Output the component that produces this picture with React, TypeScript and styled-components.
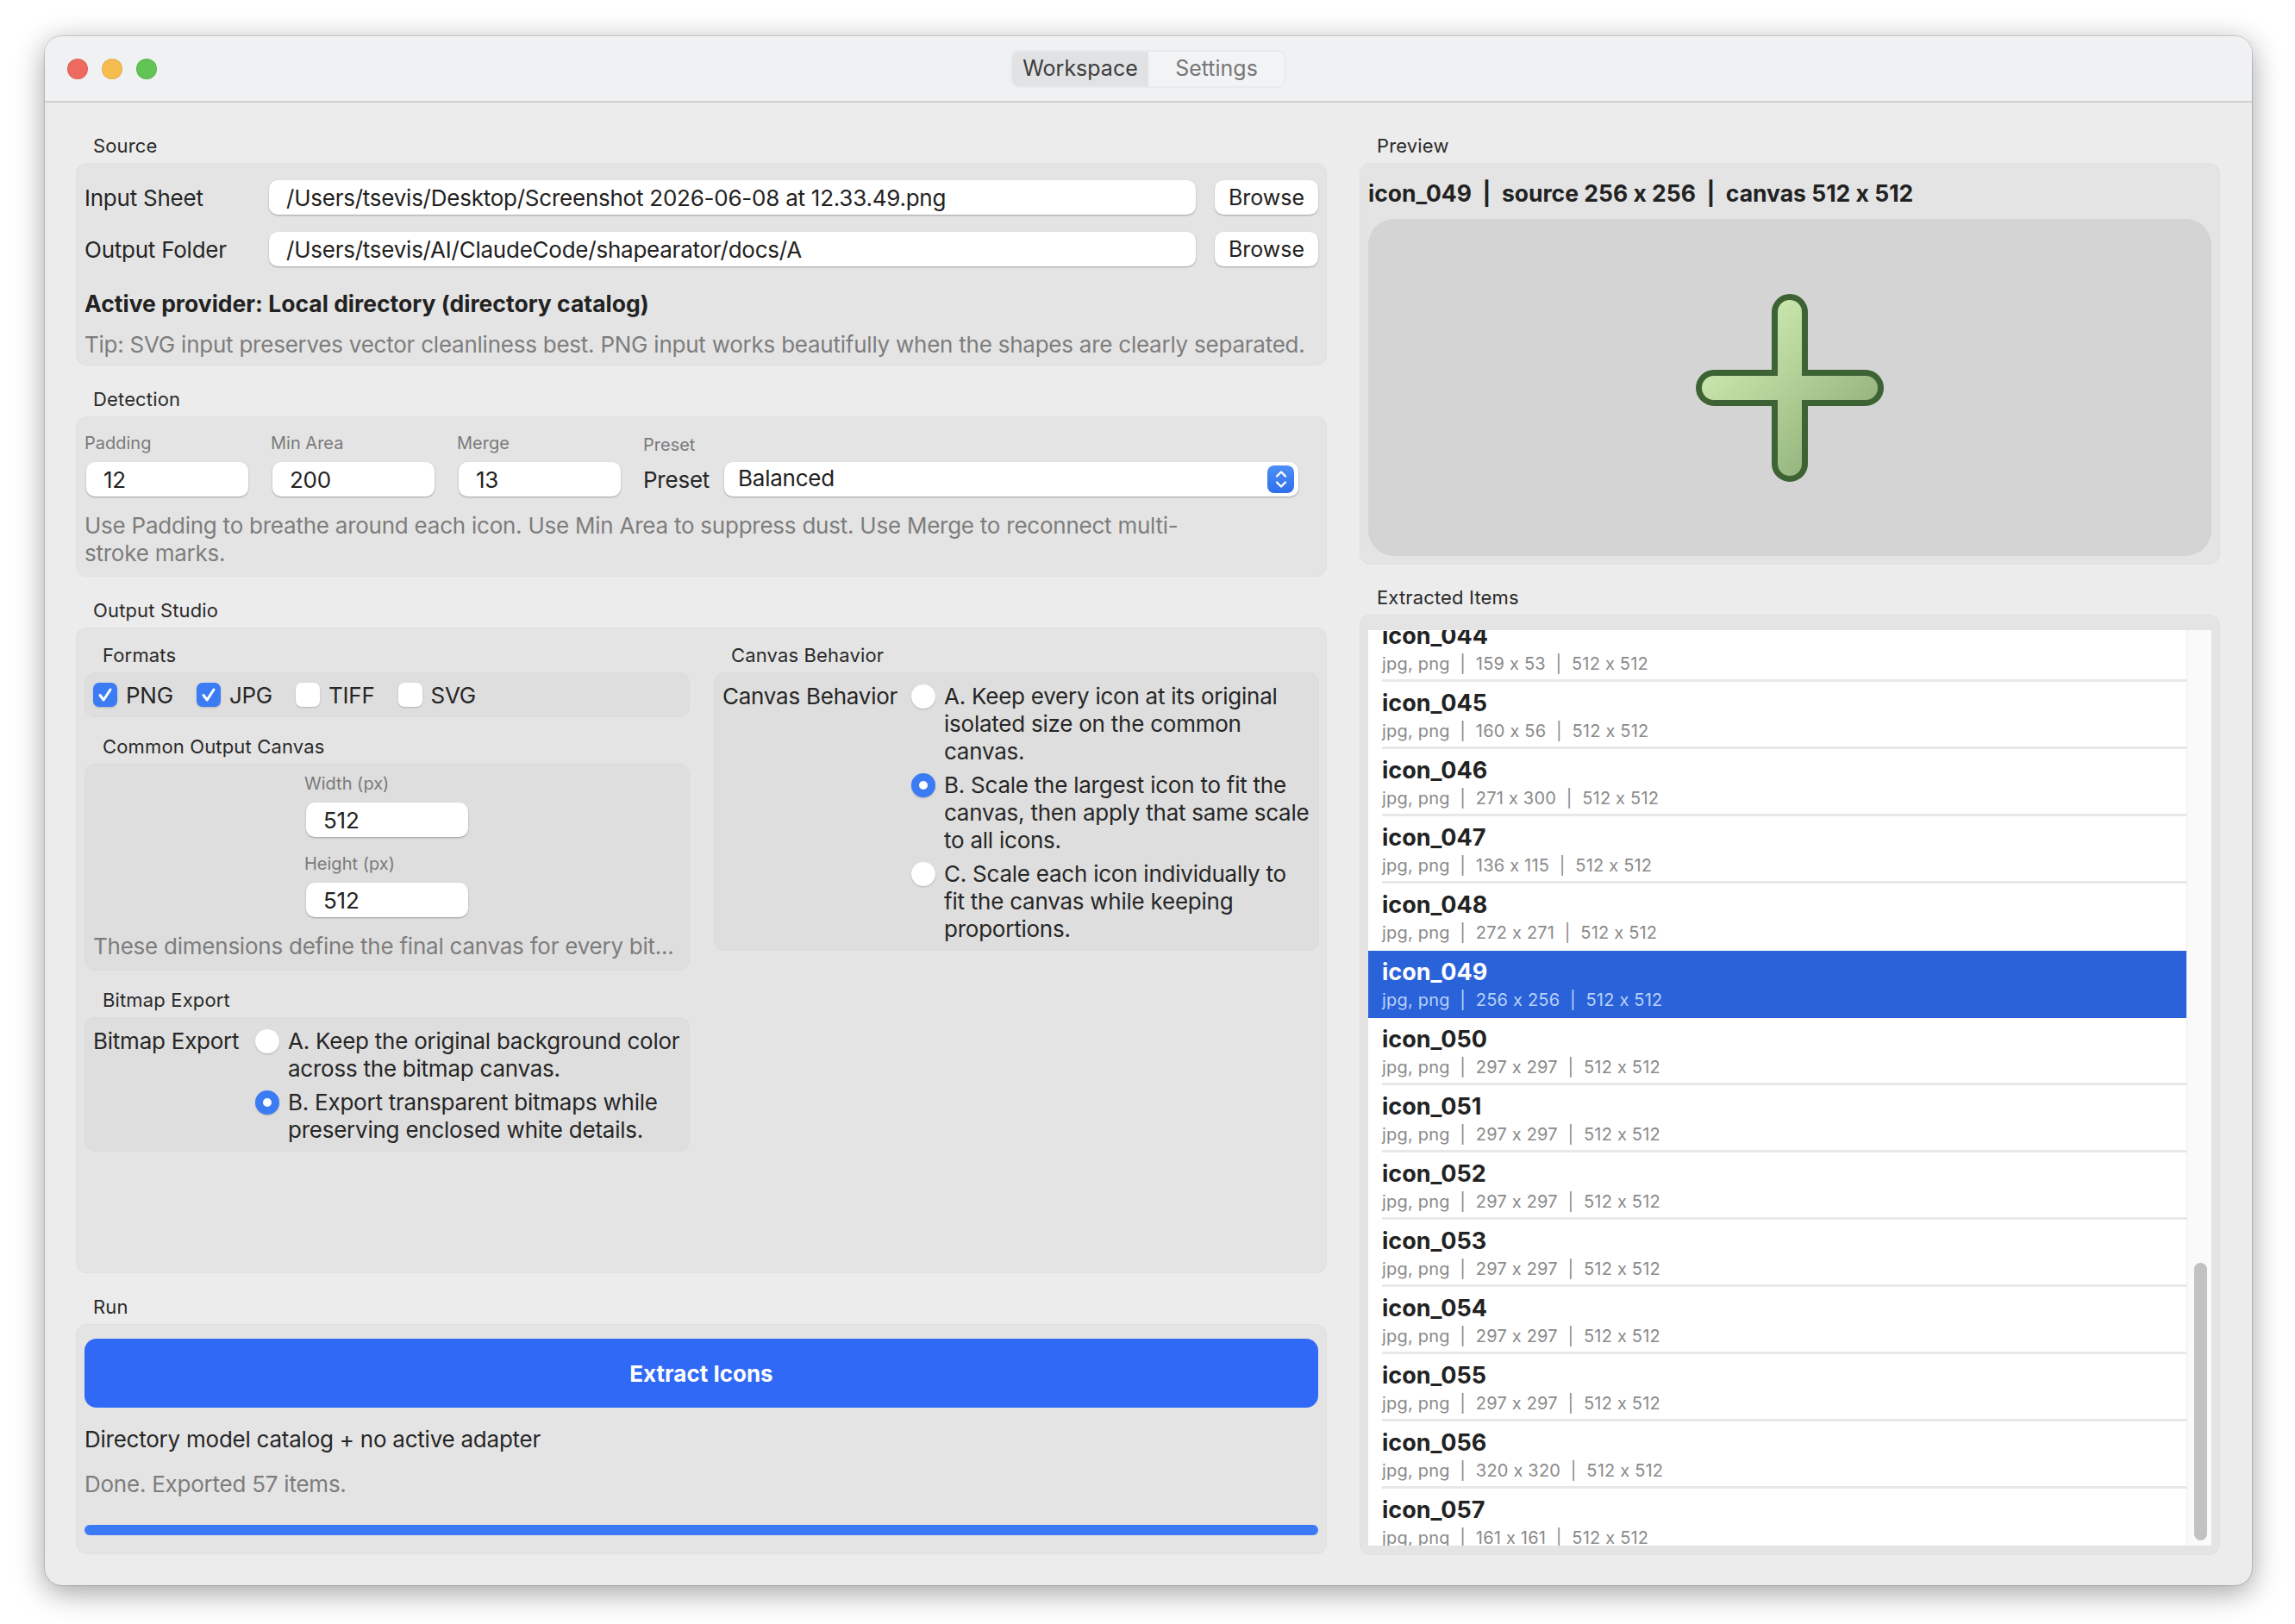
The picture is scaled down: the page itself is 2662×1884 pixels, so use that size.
import React from "react";
import styled, { createGlobalStyle } from "styled-components";

const rows = [
  ["icon_044", "159 x 53"],
  ["icon_045", "160 x 56"],
  ["icon_046", "271 x 300"],
  ["icon_047", "136 x 115"],
  ["icon_048", "272 x 271"],
  ["icon_049", "256 x 256"],
  ["icon_050", "297 x 297"],
  ["icon_051", "297 x 297"],
  ["icon_052", "297 x 297"],
  ["icon_053", "297 x 297"],
  ["icon_054", "297 x 297"],
  ["icon_055", "297 x 297"],
  ["icon_056", "320 x 320"],
  ["icon_057", "161 x 161"],
];

const SELECTED = "icon_049";

function CheckBox({ label, checked }: { label: string; checked?: boolean }) {
  return (
    <CheckItem>
      <CheckSquare $checked={checked}>
        {checked && (
          <svg width="20" height="20" viewBox="0 0 20 20" fill="none">
            <path d="M4 10.5 8.2 16 16 4" stroke="#fff" strokeWidth="3" strokeLinecap="round" strokeLinejoin="round" />
          </svg>
        )}
      </CheckSquare>
      {label}
    </CheckItem>
  );
}

function RadioOption({ text, on }: { text: string; on?: boolean }) {
  return (
    <OptionRow>
      <RadioDot $on={on} />
      <OptionText>{text}</OptionText>
    </OptionRow>
  );
}

export default function App() {
  return (
    <Page>
      <GlobalStyle />
      <Window>
        <TitleBar>
          <Lights>
            <Light $color="#ee6a5f" />
            <Light $color="#f5bd4f" />
            <Light $color="#61c454" />
          </Lights>
          <Segment>
            <SegmentItem $active>Workspace</SegmentItem>
            <SegmentItem>Settings</SegmentItem>
          </Segment>
        </TitleBar>

        <Main>
          <LeftColumn>
            <section>
              <SectionTitle>Source</SectionTitle>
              <SourcePanel>
                <PathRow>
                  <PathLabel>Input Sheet</PathLabel>
                  <PathInput>/Users/tsevis/Desktop/Screenshot 2026-06-08 at 12.33.49.png</PathInput>
                  <BrowseButton>Browse</BrowseButton>
                </PathRow>
                <PathRow>
                  <PathLabel>Output Folder</PathLabel>
                  <PathInput>/Users/tsevis/AI/ClaudeCode/shapearator/docs/A</PathInput>
                  <BrowseButton>Browse</BrowseButton>
                </PathRow>
                <ProviderLine>Active provider: Local directory (directory catalog)</ProviderLine>
                <TipLine>
                  Tip: SVG input preserves vector cleanliness best. PNG input works beautifully when the shapes are clearly separated.
                </TipLine>
              </SourcePanel>
            </section>

            <section>
              <SectionTitle>Detection</SectionTitle>
              <DetectionPanel>
                <FieldRow>
                  <Field>
                    <SmallLabel>Padding</SmallLabel>
                    <NumberInput>12</NumberInput>
                  </Field>
                  <Field>
                    <SmallLabel>Min Area</SmallLabel>
                    <NumberInput>200</NumberInput>
                  </Field>
                  <Field>
                    <SmallLabel>Merge</SmallLabel>
                    <NumberInput>13</NumberInput>
                  </Field>
                  <PresetField>
                    <SmallLabel $low>Preset</SmallLabel>
                    <PresetRow>
                      <PresetLabel>Preset</PresetLabel>
                      <SelectBox>
                        Balanced
                        <Stepper>
                          <svg width="18" height="26" viewBox="0 0 18 26" fill="none">
                            <path d="M4 9.5 9 4.5l5 5M4 16.5l5 5 5-5" stroke="#fff" strokeWidth="2.4" strokeLinecap="round" strokeLinejoin="round" />
                          </svg>
                        </Stepper>
                      </SelectBox>
                    </PresetRow>
                  </PresetField>
                </FieldRow>
                <HelpText>
                  Use Padding to breathe around each icon. Use Min Area to suppress dust. Use Merge to reconnect multi-stroke marks.
                </HelpText>
              </DetectionPanel>
            </section>

            <section>
              <SectionTitle>Output Studio</SectionTitle>
              <StudioPanel>
                <StudioColumn>
                  <SubTitle>Formats</SubTitle>
                  <FormatsBox>
                    <CheckBox label="PNG" checked />
                    <CheckBox label="JPG" checked />
                    <CheckBox label="TIFF" />
                    <CheckBox label="SVG" />
                  </FormatsBox>

                  <SubTitle $spaced>Common Output Canvas</SubTitle>
                  <CanvasBox>
                    <CanvasField>
                      <SmallLabel>Width (px)</SmallLabel>
                      <NumberInput>512</NumberInput>
                    </CanvasField>
                    <CanvasField>
                      <SmallLabel>Height (px)</SmallLabel>
                      <NumberInput>512</NumberInput>
                    </CanvasField>
                    <CanvasNote>These dimensions define the final canvas for every bit...</CanvasNote>
                  </CanvasBox>

                  <SubTitle $spaced>Bitmap Export</SubTitle>
                  <ChoiceBox>
                    <ChoiceLabel $width={188}>Bitmap Export</ChoiceLabel>
                    <ChoiceOptions>
                      <RadioOption text="A. Keep the original background color across the bitmap canvas." />
                      <RadioOption on text="B. Export transparent bitmaps while preserving enclosed white details." />
                    </ChoiceOptions>
                  </ChoiceBox>
                </StudioColumn>

                <StudioColumn>
                  <SubTitle $flush>Canvas Behavior</SubTitle>
                  <ChoiceBox>
                    <ChoiceLabel $width={219}>Canvas Behavior</ChoiceLabel>
                    <ChoiceOptions>
                      <RadioOption text="A. Keep every icon at its original isolated size on the common canvas." />
                      <RadioOption on text="B. Scale the largest icon to fit the canvas, then apply that same scale to all icons." />
                      <RadioOption text="C. Scale each icon individually to fit the canvas while keeping proportions." />
                    </ChoiceOptions>
                  </ChoiceBox>
                </StudioColumn>
              </StudioPanel>
            </section>

            <section>
              <SectionTitle>Run</SectionTitle>
              <RunPanel>
                <ExtractButton>Extract Icons</ExtractButton>
                <CatalogLine>Directory model catalog + no active adapter</CatalogLine>
                <DoneLine>Done. Exported 57 items.</DoneLine>
                <ProgressBar />
              </RunPanel>
            </section>
          </LeftColumn>

          <RightColumn>
            <section>
              <SectionTitle>Preview</SectionTitle>
              <PreviewPanel>
                <PreviewTitle>icon_049&nbsp; |&nbsp; source 256 x 256&nbsp; |&nbsp; canvas 512 x 512</PreviewTitle>
                <PreviewArea>
                  <svg width="218" height="218" viewBox="0 0 218 218">
                    <defs>
                      <linearGradient id="plusFill" gradientUnits="userSpaceOnUse" x1="0" y1="0" x2="218" y2="218">
                        <stop offset="0.25" stopColor="#c8e6ab" />
                        <stop offset="0.85" stopColor="#8fae78" />
                      </linearGradient>
                    </defs>
                    <path
                      d="M91.5 21a17.5 17.5 0 0 1 35 0V91.5H197a17.5 17.5 0 0 1 0 35H126.5V197a17.5 17.5 0 0 1-35 0V126.5H21a17.5 17.5 0 0 1 0-35H91.5Z"
                      fill="url(#plusFill)"
                      stroke="#3d6335"
                      strokeWidth="7"
                    />
                  </svg>
                </PreviewArea>
              </PreviewPanel>
            </section>

            <section>
              <SectionTitle>Extracted Items</SectionTitle>
              <ListPanel>
                <ListRows>
                  <RowsInner>
                    {rows.map(([name, size]) => {
                      const selected = name === SELECTED;
                      return (
                        <ListRow key={name} $selected={selected}>
                          <RowBody $selected={selected} $plain={selected || name === "icon_048"}>
                            <RowName>{name}</RowName>
                            <RowDetail $selected={selected}>jpg, png&nbsp; |&nbsp; {size}&nbsp; |&nbsp; 512 x 512</RowDetail>
                          </RowBody>
                        </ListRow>
                      );
                    })}
                  </RowsInner>
                </ListRows>
                <ScrollTrack>
                  <ScrollThumb />
                </ScrollTrack>
              </ListPanel>
            </section>
          </RightColumn>
        </Main>
      </Window>
    </Page>
  );
}

const GlobalStyle = createGlobalStyle`
  html, body {
    margin: 0;
    background: #fff;
  }
  body {
    font-family: Inter, "Liberation Sans", sans-serif;
    font-feature-settings: "calt" 0;
    color: #262626;
  }
  * {
    box-sizing: border-box;
  }
`;

const Page = styled.div`
  width: 2662px;
  height: 1884px;
  padding: 42px 50px 0 52px;
  overflow: hidden;
`;

const Window = styled.div`
  width: 2560px;
  height: 1797px;
  background: #ececec;
  border-radius: 20px;
  overflow: hidden;
  box-shadow: 0 8px 34px rgba(0, 0, 0, 0.38), 0 0 0 1px rgba(0, 0, 0, 0.14);
`;

const TitleBar = styled.div`
  height: 77px;
  background: #f0f1f2;
  border-bottom: 2px solid #d0d0d0;
  display: grid;
  grid-template-columns: 1fr auto 1fr;
  align-items: center;
`;

const Lights = styled.div`
  display: flex;
  gap: 16px;
  padding-left: 26px;
`;

const Light = styled.span<{ $color: string }>`
  width: 24px;
  height: 24px;
  border-radius: 50%;
  background: ${(p) => p.$color};
  box-shadow: inset 0 0 0 1px rgba(0, 0, 0, 0.08);
`;

const Segment = styled.div`
  display: flex;
  width: 320px;
  height: 44px;
  border: 2px solid #e9eaeb;
  border-radius: 10px;
  background: #f2f3f4;
`;

const SegmentItem = styled.div<{ $active?: boolean }>`
  width: 159px;
  display: flex;
  align-items: center;
  justify-content: center;
  font-size: 25px;
  padding-bottom: 2px;
  border-radius: 8px 0 0 8px;
  color: ${(p) => (p.$active ? "#3d3d3d" : "#777")};
  background: ${(p) => (p.$active ? "#e1e2e4" : "transparent")};
`;

const Main = styled.div`
  display: flex;
  gap: 38px;
  padding: 37px 37px 0 36px;
`;

const LeftColumn = styled.div`
  width: 1451px;
  display: flex;
  flex-direction: column;
  gap: 26px;
`;

const RightColumn = styled.div`
  width: 998px;
  display: flex;
  flex-direction: column;
  gap: 25px;
`;

const SectionTitle = styled.div`
  height: 26px;
  line-height: 26px;
  margin: 0 0 7px 20px;
  font-size: 22px;
  letter-spacing: 0.15px;
  color: #2a2a2a;
`;

const Panel = styled.div`
  background: #e4e4e4;
  border: 1px solid #e0e0e0;
  border-radius: 12px;
`;

const SourcePanel = styled(Panel)`
  height: 235px;
  padding: 19px 9px 0;
`;

const PathRow = styled.div`
  display: flex;
  align-items: center;
  height: 40px;
  margin-bottom: 20px;
`;

const PathLabel = styled.div`
  width: 214px;
  font-size: 26px;
  letter-spacing: -0.24px;
`;

const WhiteField = styled.div`
  height: 40px;
  background: #fff;
  border-radius: 10px;
  box-shadow: 0 1px 2px rgba(0, 0, 0, 0.3);
  font-size: 26px;
  letter-spacing: -0.24px;
  display: flex;
  align-items: center;
  color: #222;
`;

const PathInput = styled(WhiteField)`
  width: 1075px;
  padding-left: 20px;
`;

const BrowseButton = styled(WhiteField)`
  width: 120px;
  margin-left: 22px;
  justify-content: center;
  font-size: 25px;
  letter-spacing: 0;
`;

const ProviderLine = styled.div`
  margin-top: 27px;
  height: 32px;
  line-height: 32px;
  font-size: 26.5px;
  font-weight: 700;
  color: #222;
`;

const TipLine = styled.div`
  margin-top: 16px;
  height: 32px;
  line-height: 32px;
  font-size: 26px;
  letter-spacing: -0.24px;
  color: #7d7d7d;
  white-space: nowrap;
`;

const DetectionPanel = styled(Panel)`
  height: 186px;
  padding: 17px 9px 0;
`;

const FieldRow = styled.div`
  display: flex;
  gap: 26px;
`;

const Field = styled.div`
  width: 190px;
`;

const SmallLabel = styled.div<{ $low?: boolean }>`
  height: 26px;
  line-height: 26px;
  font-size: 20px;
  color: #7a7a7a;
  margin-top: ${(p) => (p.$low ? "2px" : "0")};
  margin-bottom: ${(p) => (p.$low ? "7px" : "9px")};
`;

const NumberInput = styled(WhiteField)`
  width: 188px;
  margin-left: 2px;
  padding-left: 20px;
`;

const PresetField = styled.div`
  width: 760px;
`;

const PresetRow = styled.div`
  display: flex;
  align-items: center;
`;

const PresetLabel = styled.div`
  width: 94px;
  font-size: 26px;
  letter-spacing: -0.24px;
`;

const SelectBox = styled(WhiteField)`
  width: 666px;
  padding: 0 5px 4px 16px;
  justify-content: space-between;
`;

const Stepper = styled.div`
  width: 31px;
  height: 32px;
  margin-top: 4px;
  border-radius: 8px;
  background: linear-gradient(#4c8ff7, #2f6fec);
  display: flex;
  align-items: center;
  justify-content: center;
`;

const HelpText = styled.div`
  width: 1290px;
  margin-top: 18px;
  font-size: 26px;
  letter-spacing: -0.24px;
  line-height: 32px;
  color: #7d7d7d;
`;

const StudioPanel = styled(Panel)`
  height: 749px;
  padding: 18px 9px 0;
  display: grid;
  grid-template-columns: 702px 702px;
  gap: 28px;
  align-items: start;
`;

const StudioColumn = styled.div`
  display: flex;
  flex-direction: column;
`;

const SubTitle = styled.div<{ $spaced?: boolean; $flush?: boolean }>`
  height: 26px;
  line-height: 26px;
  font-size: 22px;
  letter-spacing: 0.15px;
  color: #2a2a2a;
  margin: ${(p) => (p.$spaced ? "21px" : "0")} 0 7px ${(p) => (p.$flush ? "20px" : "21px")};
`;

const SubBox = styled.div`
  background: #dedede;
  border: 1px solid #dbdbdb;
  border-radius: 12px;
`;

const FormatsBox = styled(SubBox)`
  height: 52px;
  padding-left: 9px;
  display: flex;
  align-items: center;
`;

const CheckItem = styled.div`
  display: flex;
  align-items: center;
  gap: 10px;
  font-size: 26px;
  letter-spacing: -0.24px;
  margin-right: 27px;
`;

const CheckSquare = styled.span<{ $checked?: boolean }>`
  width: 28px;
  height: 28px;
  border-radius: 7px;
  display: flex;
  align-items: center;
  justify-content: center;
  background: ${(p) => (p.$checked ? "#3b7cf5" : "#fff")};
  box-shadow: 0 1px 2px rgba(0, 0, 0, 0.2);
`;

const CanvasBox = styled(SubBox)`
  height: 240px;
  padding-top: 9px;
`;

const CanvasField = styled.div`
  width: 192px;
  margin: 0 auto 18px;
`;

const CanvasNote = styled.div`
  margin: 0 0 0 9px;
  line-height: 32px;
  font-size: 26px;
  letter-spacing: -0.24px;
  color: #7d7d7d;
  white-space: nowrap;
`;

const ChoiceBox = styled(SubBox)`
  padding: 11px 9px 8px;
  display: flex;
`;

const ChoiceLabel = styled.div<{ $width: number }>`
  flex: none;
  width: ${(p) => p.$width}px;
  font-size: 26px;
  letter-spacing: -0.24px;
  line-height: 32px;
  white-space: nowrap;
`;

const ChoiceOptions = styled.div`
  flex: 1;
  display: flex;
  flex-direction: column;
  gap: 7px;
`;

const OptionRow = styled.div`
  display: flex;
  gap: 10px;
`;

const RadioDot = styled.span<{ $on?: boolean }>`
  flex: none;
  width: 28px;
  height: 28px;
  margin-top: 2px;
  border-radius: 50%;
  background: #fff;
  border: ${(p) => (p.$on ? "9px solid #3b7cf5" : "none")};
  box-shadow: 0 1px 2px rgba(0, 0, 0, 0.2);
`;

const OptionText = styled.div`
  font-size: 26px;
  letter-spacing: -0.24px;
  line-height: 32px;
`;

const RunPanel = styled(Panel)`
  height: 267px;
  padding: 16px 9px 0;
`;

const ExtractButton = styled.div`
  height: 80px;
  border-radius: 14px;
  background: #2f69f5;
  color: #fff;
  font-size: 26px;
  font-weight: 700;
  display: flex;
  align-items: center;
  justify-content: center;
`;

const CatalogLine = styled.div`
  margin-top: 21px;
  line-height: 32px;
  font-size: 26px;
  letter-spacing: -0.24px;
`;

const DoneLine = styled.div`
  margin-top: 20px;
  line-height: 32px;
  font-size: 26px;
  letter-spacing: -0.24px;
  color: #7d7d7d;
`;

const ProgressBar = styled.div`
  margin-top: 31px;
  height: 12px;
  border-radius: 6px;
  background: #3c79f5;
`;

const PreviewPanel = styled(Panel)`
  height: 466px;
  padding: 18px 9px 0;
`;

const PreviewTitle = styled.div`
  height: 32px;
  line-height: 32px;
  font-size: 26.5px;
  font-weight: 700;
  color: #222;
  margin-bottom: 14px;
`;

const PreviewArea = styled.div`
  height: 391px;
  background: #d4d4d4;
  border-radius: 30px;
  display: flex;
  align-items: center;
  justify-content: center;
`;

const ListPanel = styled(Panel)`
  height: 1091px;
  padding: 17px 9px 0;
  display: flex;
`;

const ListRows = styled.div`
  width: 950px;
  height: 1062px;
  background: #fff;
  overflow: hidden;
`;

const RowsInner = styled.div`
  margin-top: -18px;
`;

const ListRow = styled.div<{ $selected?: boolean }>`
  height: 78px;
  padding-left: ${(p) => (p.$selected ? "0" : "16px")};
  background: ${(p) => (p.$selected ? "#2a62d9" : "#fff")};
`;

const RowBody = styled.div<{ $selected?: boolean; $plain?: boolean }>`
  height: 78px;
  padding: 9px 0 0 ${(p) => (p.$selected ? "16px" : "0")};
  border-bottom: 3px solid ${(p) => (p.$plain ? "transparent" : "#e8e8e8")};
  color: ${(p) => (p.$selected ? "#fff" : "#222")};
`;

const RowName = styled.div`
  height: 32px;
  line-height: 32px;
  font-size: 27px;
  font-weight: 700;
`;

const RowDetail = styled.div<{ $selected?: boolean }>`
  margin-top: 3px;
  line-height: 26px;
  font-size: 20px;
  letter-spacing: 0.2px;
  color: ${(p) => (p.$selected ? "#b9d1f8" : "#8a8a8a")};
`;

const ScrollTrack = styled.div`
  width: 29px;
  height: 1062px;
  padding: 734px 5px 6px 8px;
  background: #fafafa;
  border-left: 1px solid #ececec;
  display: flex;
`;

const ScrollThumb = styled.div`
  flex: 1;
  border-radius: 8px;
  background: #c2c2c2;
`;
